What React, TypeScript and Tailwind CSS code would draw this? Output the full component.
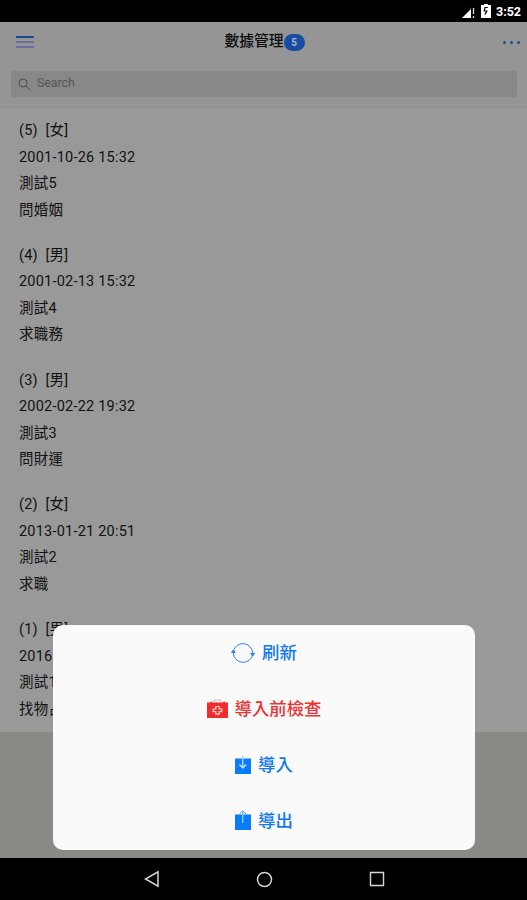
type DataRecord = {
  id: number;
  gender: string;
  time: string;
  name: string;
  question: string;
};

const records: DataRecord[] = [
  { id: 5, gender: "女", time: "2001-10-26 15:32", name: "測試5", question: "問婚姻" },
  { id: 4, gender: "男", time: "2001-02-13 15:32", name: "測試4", question: "求職務" },
  { id: 3, gender: "男", time: "2002-02-22 19:32", name: "測試3", question: "問財運" },
  { id: 2, gender: "女", time: "2013-01-21 20:51", name: "測試2", question: "求職" },
  { id: 1, gender: "男", time: "2016", name: "測試1", question: "找物占" },
];

function StatusBar() {
  return (
    <div className="flex h-[22px] shrink-0 items-center justify-end bg-black pr-[6px] pt-[2px] text-white">
      <svg width="13" height="12" viewBox="0 0 13 12" className="mt-[-1px] mr-[6px]">
        <path d="M0 12 9 3v9z" fill="#fff" />
        <path d="M9 3V1L7 5z" fill="#777" />
        <path d="M11.5 2v6M11.5 10v2" stroke="#ddd" strokeWidth="1.3" />
      </svg>
      <svg width="10" height="14" viewBox="0 0 10 14" className="mt-[-2px] mr-[5px]">
        <path d="M3 0h4v1h3v13H0V1h3z" fill="#fff" />
        <path d="M6.8 3.5H4L3.2 7h2.6L4 10.5" fill="none" stroke="#000" strokeWidth="1.2" />
      </svg>
      <span className="w-[25px] text-[12.5px] leading-none font-bold">3:52</span>
    </div>
  );
}

function Header() {
  return (
    <header className="h-[86px] shrink-0 border-b border-[#909090] bg-[#959595]">
      <div className="flex h-[40px] items-center justify-between pl-4 pr-[7px]">
        <button className="mt-[-1px] flex w-[18px] flex-col gap-[3px]">
          <span className="h-[2px] bg-[#194a95]" />
          <span className="h-[2px] bg-[#6970a0]" />
          <span className="h-[2px] bg-[#6970a0]" />
        </button>
        <div className="flex items-center pr-[8px]">
          <h1 className="pb-[3px] text-[14.8px] leading-5 font-medium text-[#0c0c0c]">數據管理</h1>
          <span className="flex h-[17px] w-[21px] items-center justify-center rounded-full bg-[#174ca0] text-[10px] font-bold text-[#a5b8d2]">
            5
          </span>
        </div>
        <button className="flex gap-[4px]">
          <span className="h-[3px] w-[3px] rounded-full bg-[#234c98]" />
          <span className="h-[3px] w-[3px] rounded-full bg-[#234c98]" />
          <span className="h-[3px] w-[3px] rounded-full bg-[#234c98]" />
        </button>
      </div>
      <div className="mr-[10px] ml-[11px] mt-[9px] flex h-[26px] items-center rounded-[3px] bg-[#888888] pl-[7px]">
        <svg width="13" height="13" viewBox="0 0 13 13" fill="none" stroke="#4e4e4e">
          <circle cx="5" cy="5" r="4" />
          <path d="m8 8 4.5 4.5" />
        </svg>
        <span className="ml-[6px] pb-[2px] text-[12.3px] leading-4 text-[#555555]">Search</span>
      </div>
    </header>
  );
}

function RecordItem({ record }: { record: DataRecord }) {
  return (
    <li className="mb-[18.8px] text-[14.5px] leading-[26.5px] tracking-[0.22px] whitespace-pre text-[#111111]">
      <p className="h-[26.5px]">{`(${record.id})  [${record.gender}]`}</p>
      <p className="h-[26.5px]">{record.time}</p>
      <p className="h-[26.5px]">{record.name}</p>
      <p className="h-[26.5px]">{record.question}</p>
    </li>
  );
}

function RefreshIcon() {
  return (
    <svg width="24" height="22" viewBox="0 0 24 22" fill="none" stroke="#2b83ed">
      <path d="M2.3 9.5A9.8 9.8 0 0 1 21.7 11M21.7 12.5A9.8 9.8 0 0 1 2.3 11" />
      <path d="m.5 10.5 1.8-2.5 2 2.5zM19.7 11.5l2 2.5 1.8-2.5z" fill="#2b83ed" />
    </svg>
  );
}

function CheckIcon() {
  return (
    <svg width="21" height="20" viewBox="0 0 21 20" fill="none">
      <path d="M7 3.5V1h7v2.5" stroke="#f5a6a6" />
      <path d="M0 3.5h3v-.7h2v.7h11v-.7h2v.7h3V19H0z" fill="#f12c2c" />
      <path d="M8.8 7.5h3.4V10h2.6v2.6h-2.6v2.6H8.8v-2.6H6.2V10h2.6z" stroke="#ffd9d9" strokeWidth="1.2" />
    </svg>
  );
}

function ImportIcon() {
  return (
    <svg width="16" height="18" viewBox="0 0 16 18" fill="none">
      <path d="M0 2.5h16V18H0z" fill="#087cf9" />
      <path d="M7.8 0v2.5" stroke="#75b5fa" />
      <path d="M7.8 2.5v9M4.5 8.5l3.3 3.3 3.3-3.3" stroke="#d3e8ff" strokeWidth="1.2" />
    </svg>
  );
}

function ExportIcon() {
  return (
    <svg width="16" height="20" viewBox="0 0 16 20" fill="none" className="mt-[-2px]">
      <path d="M0 4.5h16V20H0z" fill="#087cf9" />
      <path d="m4.5 4 3.3-3.2L11.1 4M7.8 1v3.5" stroke="#4c9ff9" />
      <path d="M7.8 4.5V13" stroke="#c5e0ff" />
    </svg>
  );
}

function ActionSheet() {
  return (
    <div
      role="dialog"
      className="absolute top-[624.5px] left-[53px] flex h-[225px] w-[422px] flex-col rounded-[10px] bg-[#fafafa] text-[17.4px] leading-6 font-medium text-[#1279ee]"
    >
      <button className="flex flex-1 items-center justify-center gap-[7px]">
        <RefreshIcon />
        <span>刷新</span>
      </button>
      <button className="flex flex-1 items-center justify-center gap-[7px] text-[#ee3030]">
        <CheckIcon />
        <span>導入前檢查</span>
      </button>
      <button className="flex flex-1 items-center justify-center gap-[7px]">
        <ImportIcon />
        <span>導入</span>
      </button>
      <button className="flex flex-1 items-center justify-center gap-[7px]">
        <ExportIcon />
        <span>導出</span>
      </button>
    </div>
  );
}

function NavigationBar() {
  return (
    <nav className="flex h-[42px] shrink-0 items-center justify-center gap-[96px] bg-black pl-[1px]">
      <svg width="16" height="18" viewBox="0 0 16 18" fill="none" stroke="#d6d6d6" strokeWidth="1.5">
        <path d="M14 1.8v14.4L1.5 9z" />
      </svg>
      <svg width="17" height="17" viewBox="0 0 17 17" fill="none" stroke="#d6d6d6" strokeWidth="1.5">
        <circle cx="8.5" cy="8.5" r="7" />
      </svg>
      <svg width="16" height="16" viewBox="0 0 16 16" fill="none" stroke="#d6d6d6" strokeWidth="1.4">
        <path d="M1.5 1.5h13v13h-13z" />
      </svg>
    </nav>
  );
}

export default function App() {
  return (
    <div className="relative flex h-[900px] w-[527px] flex-col overflow-hidden bg-[#898985] font-[Roboto,'Noto_Sans_CJK_TC',sans-serif]">
      <StatusBar />
      <Header />
      <ul className="h-[624px] shrink-0 overflow-hidden bg-[#999999] pt-[10px] pl-[19px]">
        {records.map((record) => (
          <RecordItem key={record.id} record={record} />
        ))}
      </ul>
      <div className="flex-1" />
      <NavigationBar />
      <ActionSheet />
    </div>
  );
}
